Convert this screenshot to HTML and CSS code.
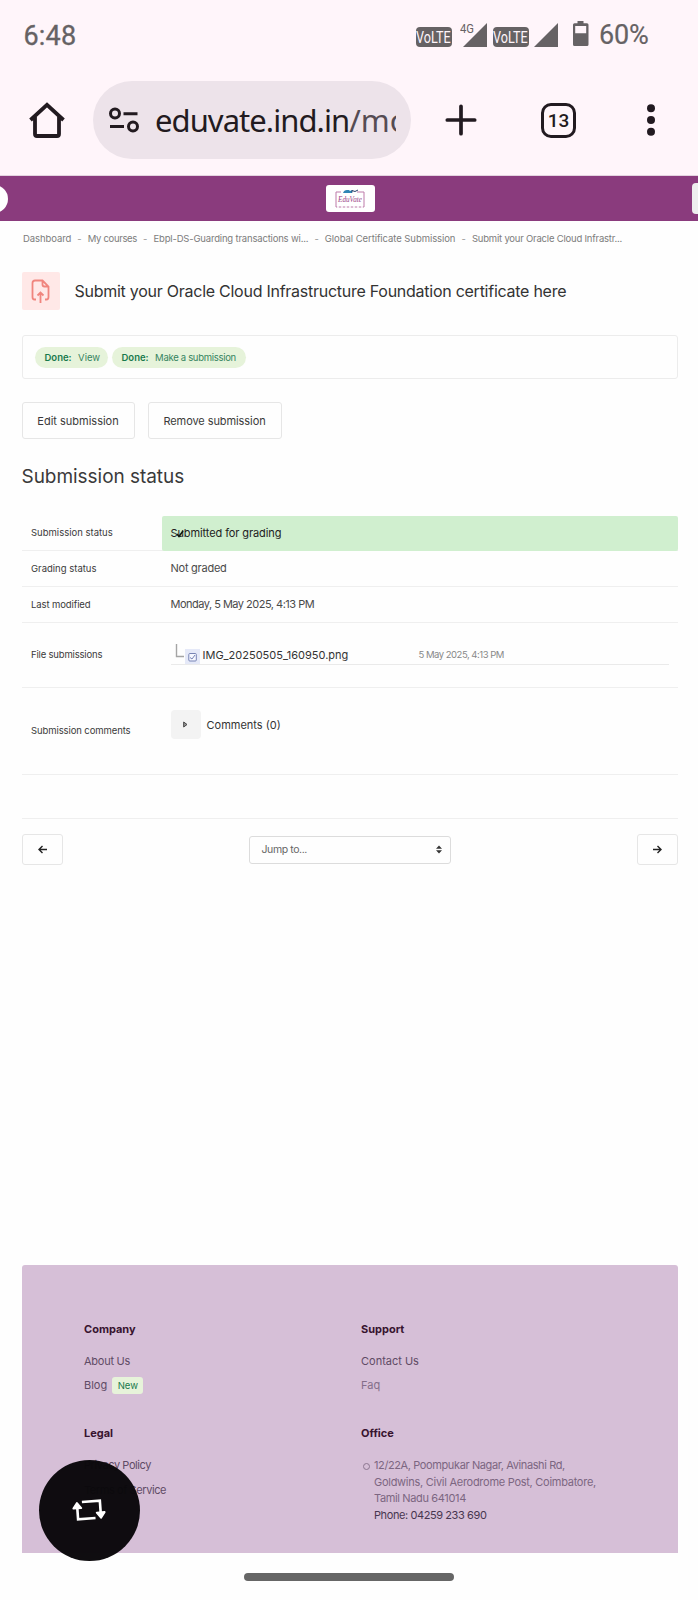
FILE: index.html
```html
<!DOCTYPE html>
<html lang="en">
<head>
<meta charset="utf-8">
<title>Submit your Oracle Cloud Infrastructure Foundation certificate here</title>
<link rel="stylesheet" href="styles.css">
</head>
<body>
<div class="chrome">
  <div class="status">
    <span class="clock">6:48</span>
    <div class="indicators">
      <span class="volte"><span>VoLTE</span></span>
      <svg class="signal signal-4g" width="28" height="26" viewBox="0 0 28 26"><path d="M27 1v24H3z" fill="#666264"/><text x="0" y="11" class="net" textLength="14" lengthAdjust="spacingAndGlyphs">4G</text></svg>
      <span class="volte second"><span>VoLTE</span></span>
      <svg class="signal" width="25" height="26" viewBox="0 0 25 26"><path d="M24 1v24H0z" fill="#666264"/></svg>
      <svg class="battery" width="16" height="26" viewBox="0 0 16 26"><path d="M4.500 0h6v2.300H14q1.500 0 1.500 1.500V23.500q0 1.500-1.500 1.500H1.500Q0 25 0 23.500V3.800Q0 2.300 1.500 2.300h3zM2.200 5v7.200h11V5z" fill="#666264" fill-rule="evenodd"/></svg>
      <span class="percent">60%</span>
    </div>
  </div>
  <div class="toolbar">
    <svg class="home" width="36" height="36" viewBox="0 0 36 36" fill="none" stroke="#221a20" stroke-width="3.800"><path d="M1.500 18 18 2.800 34.500 18M6 15v17q0 2 2 2h20q2 0 2-2V15"/></svg>
    <div class="url">
      <svg width="30" height="26" viewBox="0 0 30 26" fill="none" stroke="#221a20" stroke-width="3"><circle cx="6" cy="6.500" r="4.500"/><circle cx="24" cy="19.500" r="4.500"/><path d="M14.500 6.800H28.500M1 19.500h14"/></svg>
      <div class="address">eduvate.ind.in<span class="path">/mo</span></div>
    </div>
    <svg class="plus" width="32" height="32" viewBox="0 0 32 32" stroke="#221a20" stroke-width="3.700" stroke-linecap="round"><path d="M16 2.300v27.400M2.300 16h27.400"/></svg>
    <div class="tabs">13</div>
    <svg class="dots" width="10" height="34" viewBox="0 0 10 34" fill="#221a20"><circle cx="5" cy="5.200" r="4"/><circle cx="5" cy="17" r="4"/><circle cx="5" cy="28.800" r="4"/></svg>
  </div>
</div>
<header class="site-header">
  <div class="round"></div>
  <div class="logo">
    <svg width="32" height="20" viewBox="0 0 32 20"><path d="M7 3H2v15h28V3h-7" fill="none" stroke="#bd7ba9"/><path d="M3 18h26" stroke="#fff" stroke-dasharray="2 2" stroke-width="1.500"/><path d="M9 4q1-3 4-3h2l1 1 2-1v3z" fill="#2f86b5"/><path d="M18 3.500V1.500l3 1 3-1.500" fill="none" stroke="#263e68"/><text x="4" y="12.500" class="logo-text" textLength="24" lengthAdjust="spacingAndGlyphs">EduVate</text></svg>
  </div>
  <div class="edge"></div>
</header>
<nav class="crumbs">
  <span class="c1">Dashboard</span><i>-</i><span class="c2">My courses</span><i>-</i><span class="c3">Ebpl-DS-Guarding transactions wi...</span><i>-</i><span class="c4">Global Certificate Submission</span><i>-</i><span class="c5">Submit your Oracle Cloud Infrastr...</span>
</nav>
<main class="page">
  <div class="title-row">
    <div class="title-icon"><svg width="19" height="25" viewBox="0 0 19 25" fill="none" stroke="#f0857e" stroke-width="1.800"><path d="M5 20.500H3.500Q1.500 20.500 1.500 18V4q0-2.500 2.500-2.500h7.500l6 6V18q0 2.500-2 2.500H14M11.500 1.500V5.500q0 2 2 2h4M9.500 24V14M6.500 16.500l3-3 3 3"/></svg></div>
    <h1>Submit your Oracle Cloud Infrastructure Foundation certificate here</h1>
  </div>
  <div class="completion">
    <span class="pill p1"><b>Done:</b><span>View</span></span>
    <span class="pill p2"><b>Done:</b><span class="made">Make a submission</span></span>
  </div>
  <div class="actions"><span class="btn b1">Edit submission</span><span class="btn b2">Remove submission</span></div>
  <h2>Submission status</h2>
  <div class="table">
    <div class="row r1"><div class="label">Submission status</div><div class="value ok">Submitted for grading<svg class="tick" width="8" height="8" viewBox="0 0 8 8"><path d="M1 4l2 2.500L7 1" fill="none" stroke="#101810" stroke-width="1.600"/></svg></div></div>
    <div class="row r2"><div class="label">Grading status</div><div class="value">Not graded</div></div>
    <div class="row r3"><div class="label">Last modified</div><div class="value date">Monday, 5 May 2025, 4:13 PM</div></div>
    <div class="row r4"><div class="label">File submissions</div><div class="value">
      <div class="file">
        <svg class="branch" width="10" height="15" viewBox="0 0 10 15"><path d="M1.500 0v12.500H9" fill="none" stroke="#a5a5a5" stroke-width="1.400"/></svg>
        <svg class="thumb" width="15" height="15" viewBox="0 0 15 15"><rect width="15" height="15" fill="#e5e9f8"/><rect x="3.800" y="4.500" width="7.500" height="7.500" rx="1" fill="#f5f7ff" stroke="#7783b4"/><path d="M5 8.500l2 1.500 3-4" fill="none" stroke="#7783b4"/></svg>
        <span class="fname">IMG_20250505_160950.png</span><span class="fdate">5 May 2025, 4:13 PM</span>
      </div></div></div>
    <div class="row r5"><div class="label">Submission comments</div><div class="value"><div class="comments"><span class="toggle"><svg width="5" height="7" viewBox="0 0 5 7"><path d="M.7 1l3.300 2.500L.7 6z" fill="#999" stroke="#444"/></svg></span><span>Comments (0)</span></div></div></div>
    <div class="row r6"></div>
  </div>
  <div class="jump">
    <span class="arrow"><svg width="9" height="9" viewBox="0 0 9 9" fill="none" stroke="#222" stroke-width="1.400"><path d="M9 4.500H1M4.500 1 1 4.500 4.500 8"/></svg></span>
    <span class="select"><span>Jump to...</span><svg width="6" height="9" viewBox="0 0 6 9" fill="#333"><path d="M0 3.800 3 .5l3 3.300zM0 5.200h6L3 8.500z"/></svg></span>
    <span class="arrow"><svg width="9" height="9" viewBox="0 0 9 9" fill="none" stroke="#222" stroke-width="1.400"><path d="M0 4.500h8M4.500 1 8 4.500 4.500 8"/></svg></span>
  </div>
</main>
<footer class="footer">
  <section><h3>Company</h3><p class="about">About Us</p><p>Blog <span class="new">New</span></p></section>
  <section><h3>Support</h3><p>Contact Us</p><p class="light">Faq</p></section>
  <section><h3>Legal</h3><p class="policy">Privacy Policy</p><p class="policy">Terms of Service</p></section>
  <section><h3>Office</h3><ul class="office"><li><span class="a1">12/22A, Poompukar Nagar, Avinashi Rd,</span><br><span class="a2">Goldwins, Civil Aerodrome Post, Coimbatore,</span><br><span class="a3">Tamil Nadu 641014</span><br><span class="phone">Phone: 04259 233 690</span></li></ul></section>
</footer>
<div class="gesture"></div>
<div class="fab"><svg width="36" height="23" viewBox="-1 -1 36 23" fill="none" stroke="#fff" stroke-width="2.600"><g transform="rotate(-4 17 10.500)"><path d="M10.500 1.500H28.500V15M23 18.500H5.500V6"/><path d="M5.500 2.200 1.600 7.500h7.800zM28.500 18.500l-3.900-5.300h7.800z" fill="#fff" stroke-width="2" stroke-linejoin="round"/></g></svg></div>
</body>
</html>
```
FILE: styles.css
```css
* { box-sizing: border-box; }
body { margin: 0; width: 698px; height: 1600px; overflow: hidden; position: relative; background: #fefefe; font-family: Inter, sans-serif; color: #3a3a3a; white-space: nowrap; }
svg { display: block; flex: none; }
h1, h2, h3, p, ul { margin: 0; padding: 0; font-weight: 400; }

.chrome { height: 176px; background: #fff5fa; border-bottom: 1px solid #e3d3df; }
.status { height: 81px; display: flex; justify-content: space-between; padding: 0 51px 0 23.500px; font-family: Roboto, sans-serif; color: #666264; }
.clock { font-size: 27px; line-height: 72px; letter-spacing: .2px; -webkit-text-stroke: .3px #666264; }
.indicators { display: flex; align-items: flex-start; }
.volte { width: 36px; height: 20px; margin-top: 26.500px; background: #666264; border-radius: 4px; color: #fff5fa; font-size: 17px; line-height: 21px; display: flex; justify-content: center; }
.volte span { transform: scaleX(.74); }
.volte.second { margin-left: 5px; }
.signal { margin: 22px 0 0 5px; }
.signal-4g { margin-left: 8px; }
.net { font: 12px Roboto, sans-serif; fill: #666264; }
.battery { margin: 21px 10px 0 14.500px; }
.percent { font-size: 27px; line-height: 70px; width: 48px; letter-spacing: -.2px; -webkit-text-stroke: .2px #666264; }
.toolbar { height: 78px; display: flex; align-items: center; padding-left: 28.500px; }
.url { margin-left: 28.500px; width: 318px; height: 78px; border-radius: 39px; background: #ede3ea; display: flex; align-items: center; padding-left: 16px; }
.address { margin-left: 16px; width: 241px; overflow: hidden; font: 31px/50px "Noto Sans", sans-serif; letter-spacing: -.95px; color: #221a20; }
.path { color: #554c53; letter-spacing: 0; }
.plus { margin-left: 34px; }
.tabs { margin-left: 64px; width: 35px; height: 35px; border: 3.500px solid #221a20; border-radius: 10px; font: 500 19px/29px Roboto, sans-serif; color: #221a20; text-align: center; }
.dots { margin-left: 70px; }

.site-header { height: 45px; background: #8a3b7d; display: flex; align-items: center; overflow: hidden; }
.round { flex: none; width: 28px; height: 28px; margin-left: -20px; border-radius: 50%; background: #fff; }
.logo { width: 49px; height: 27px; margin-left: 317.500px; margin-right: auto; background: #fff; border-radius: 3px; display: flex; align-items: center; justify-content: center; }
.logo-text { font: italic 8px "Liberation Serif", serif; fill: #9a4388; }
.edge { width: 6px; height: 31px; background: #eee; border-radius: 4px 0 0 4px; }

.crumbs { height: 51px; padding: 11.500px 0 0 23px; display: flex; font-size: 9.500px; line-height: 12px; color: #7c7c7c; }
.crumbs i { width: 16.500px; text-align: center; font-style: normal; color: #999; }
.c1 { letter-spacing: -.08px; }
.c2 { letter-spacing: -.33px; }
.c3 { letter-spacing: -.18px; }
.c4 { letter-spacing: -.07px; }
.c5 { letter-spacing: -.21px; }

.page { padding: 0 20.500px 0 21.500px; height: 993px; }
.title-row { display: flex; align-items: center; height: 38px; }
.title-icon { width: 38.500px; height: 38px; border-radius: 2px; background: #ffe8e7; display: flex; align-items: center; justify-content: center; }
h1 { margin-left: 14.500px; font-size: 16px; line-height: 22px; letter-spacing: -.26px; color: #333; }
.completion { margin-top: 25px; height: 44px; border: 1px solid #ececec; border-radius: 3px; display: flex; gap: 4px; padding: 11px 0 0 12px; }
.pill { height: 21px; border-radius: 11px; background: #e6f3da; padding-left: 10px; display: flex; gap: 6.500px; font-size: 9.500px; line-height: 22px; color: #35845f; }
.pill b { font-weight: 600; color: #187a4c; }
.made { letter-spacing: -.3px; }
.p1 { width: 73px; }
.p2 { width: 134px; }
.actions { margin-top: 23px; display: flex; gap: 13px; }
.btn { height: 37px; border: 1px solid #e6e6e6; border-radius: 3px; font-size: 11px; line-height: 36px; text-align: center; }
.b1 { width: 113px; }
.b2 { width: 134px; letter-spacing: -.08px; }
h2 { margin-top: 24px; height: 28px; font-size: 19px; line-height: 28px; letter-spacing: -.04px; }
.table { margin-top: 25px; }
.row { display: flex; border-bottom: 1.500px solid #efefef; }
.label { width: 140px; padding: 0 0 1px 9.500px; font-size: 9.500px; display: flex; align-items: center; }
.value { flex: 1; padding: 0 0 1px 9px; font-size: 11px; display: flex; align-items: center; position: relative; color: #4a4a4a; }
.ok { background: #d0efcf; border-radius: 2px; color: #222; margin-bottom: -1px; padding-bottom: 2px; letter-spacing: -.1px; }
.tick { position: absolute; left: 14px; top: 14px; }
.r1 { height: 35px; }
.r2 { height: 36px; }
.r3 { height: 36px; }
.r4 { height: 65px; }
.r5 { height: 87px; }
.r6 { height: 44px; }
.r2 .value { letter-spacing: -.25px; }
.r3 .label { letter-spacing: -.1px; }
.r4 .label { letter-spacing: -.18px; }
.r5 .label { letter-spacing: -.1px; }
.date { letter-spacing: -.51px; }
.file { width: 498px; height: 21px; border-bottom: 1px solid #eaeaea; display: flex; align-items: center; }
.branch { margin: -5px 0 0 4px; }
.thumb { margin: 4px 3px 0 0; }
.fname { width: 216px; color: #333; padding-top: 2px; }
.fdate { font-size: 9.500px; letter-spacing: -.49px; color: #888; }
.comments { display: flex; align-items: center; gap: 6px; margin-top: -12px; color: #333; }
.toggle { width: 30px; height: 29px; border-radius: 4px; background: #f3f3f3; display: flex; align-items: center; justify-content: center; }
.jump { margin-top: 15px; height: 31px; display: flex; align-items: center; justify-content: space-between; }
.arrow { width: 41px; height: 31px; border: 1px solid #e6e6e6; border-radius: 3px; display: flex; align-items: center; justify-content: center; }
.select { width: 202px; height: 28px; border: 1px solid #dcdcdc; border-radius: 3px; display: flex; align-items: center; justify-content: space-between; padding: 0 8px 0 12px; font-size: 10.500px; letter-spacing: -.4px; color: #666; }

.footer { margin-left: 22px; width: 656px; height: 288px; background: #d6bfd7; border-radius: 3px 3px 0 0; display: grid; grid-template-columns: 277px 1fr; grid-template-rows: 104.500px 1fr; padding: 54.500px 0 0 62px; color: #5f4b65; font-size: 11px; }
h3 { font-size: 11px; font-weight: 700; line-height: 18px; margin-bottom: 11px; color: #38142f; }
.footer p { line-height: 24.500px; }
.about { letter-spacing: -.25px; }
.policy { letter-spacing: -.41px; }
.light { color: #846e89; }
.new { display: inline-block; width: 31px; height: 17px; border-radius: 3px; background: #e7f3da; color: #187a4c; font-size: 9.500px; line-height: 17px; text-align: center; margin-left: 2px; }
.office { list-style: none; line-height: 16.500px; color: #7c6681; padding-top: 4px; position: relative; }
.office li { padding-left: 13px; }
.office li::before { content: ""; position: absolute; left: 2px; top: 10px; width: 5px; height: 5px; border: 1px solid #8c7690; border-radius: 50%; }
.a1 { letter-spacing: -.39px; }
.a2 { letter-spacing: -.27px; }
.a3 { letter-spacing: -.36px; }
.phone { color: #483650; letter-spacing: -.41px; }
.gesture { width: 210px; height: 8.500px; margin: 19.500px 0 0 244px; border-radius: 5px; background: #666; }
.fab { position: absolute; left: 38.500px; top: 1460px; width: 101px; height: 101px; border-radius: 50%; background: rgba(10, 8, 11, .98); display: flex; align-items: center; justify-content: center; }
```
